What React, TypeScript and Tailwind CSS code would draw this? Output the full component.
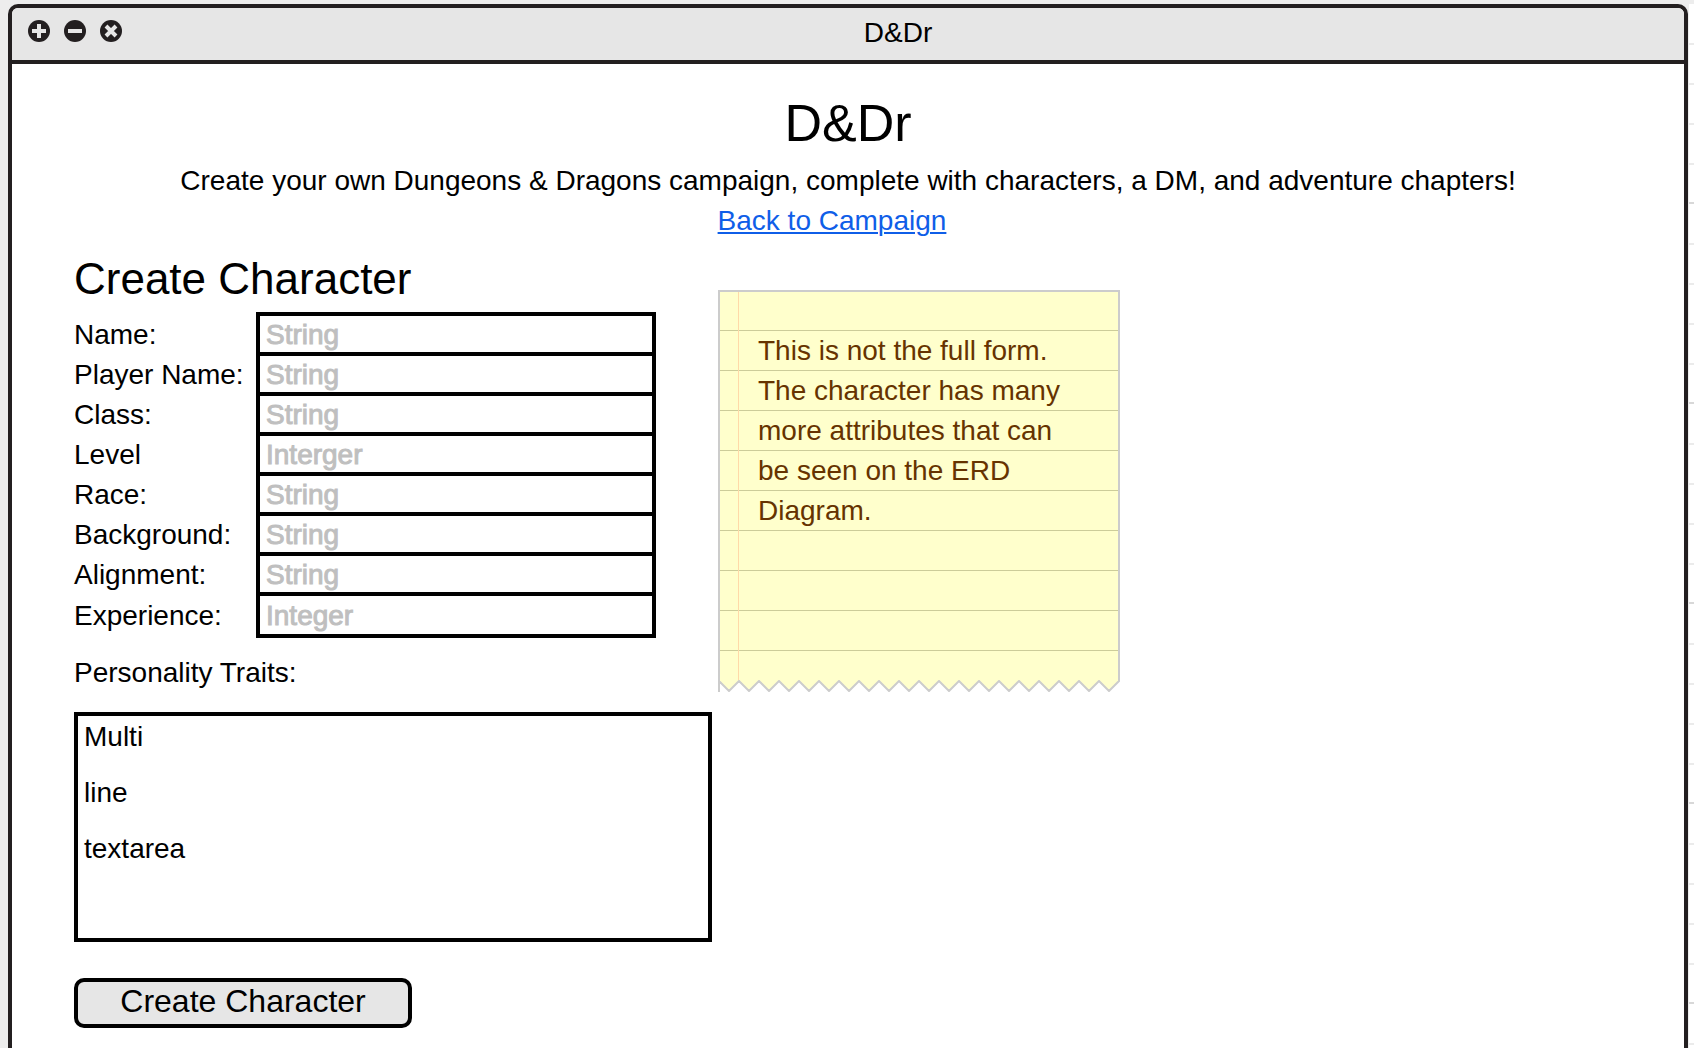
type Field = { id: string; label: string; hint: string };

const fields: Field[] = [
  { id: "name", label: "Name:", hint: "String" },
  { id: "player-name", label: "Player Name:", hint: "String" },
  { id: "class", label: "Class:", hint: "String" },
  { id: "level", label: "Level", hint: "Interger" },
  { id: "race", label: "Race:", hint: "String" },
  { id: "background", label: "Background:", hint: "String" },
  { id: "alignment", label: "Alignment:", hint: "String" },
  { id: "experience", label: "Experience:", hint: "Integer" },
];

const windowIcons = [
  { name: "Add", path: "M11 4V18M4 11H18" },
  { name: "Minimize", path: "M4 11H18" },
  { name: "Close", path: "M6 6L16 16M16 6L6 16" },
];

function TitleBar() {
  return (
    <header className="flex h-14 items-center border-b-4 border-[#231f20] bg-[#e6e6e6] px-4">
      <div className="flex gap-3.5">
        {windowIcons.map((icon) => (
          <button key={icon.name} type="button" aria-label={icon.name} className="mb-1.5">
            <svg className="block size-[22px]" viewBox="0 0 22 22" fill="none">
              <circle cx="11" cy="11" r="11" fill="#231f20" />
              <path d={icon.path} stroke="#e6e6e6" strokeWidth="4" />
            </svg>
          </button>
        ))}
      </div>
      <span className="mb-0.5 ml-1.5 flex-1 text-center">D&amp;Dr</span>
    </header>
  );
}

// Torn lower edge of the note: 20 teeth, each 20 wide and 10 high.
const teeth = Array.from({ length: 20 }, (_, i) => `L${11 + i * 20} 11L${21 + i * 20} 1`).join("");

function Note() {
  return (
    <aside className="mt-9 w-[402px] shrink-0 text-[#663300]">
      <div className="h-[390px] border-x-2 border-t-2 border-[#cccccc] bg-[#ffffcc] bg-[linear-gradient(to_right,transparent_18px,#ffd9a8_18px,#ffd9a8_19px,transparent_19px),repeating-linear-gradient(to_bottom,transparent_0px,transparent_38px,#cccc99_38px,#cccc99_39px,transparent_39px,transparent_40px)] pt-[39px] pr-10 pl-[38px]">
        <p>This is not the full form. The character has many more attributes that can be seen on the ERD Diagram.</p>
      </div>
      <svg className="block h-3 w-full" viewBox="0 0 402 12" fill="none">
        <path d={`M1 0V1${teeth}V0Z`} fill="#ffffcc" />
        <path d={`M1 0V12M1 1${teeth}V0`} stroke="#cccccc" strokeWidth="2" />
      </svg>
    </aside>
  );
}

function CharacterForm() {
  return (
    <form className="w-[638px]" onSubmit={(e) => e.preventDefault()}>
      <h2 className="mb-2 text-[44px] leading-[50px]">Create Character</h2>
      <div className="w-[582px]">
        {fields.map((field) => (
          <div key={field.id} className="-mb-1 flex h-11 items-center last:mb-0 last:h-[46px]">
            <label htmlFor={field.id} className="w-[182px] shrink-0 pt-0.5">
              {field.label}
            </label>
            <input
              id={field.id}
              type="text"
              placeholder={field.hint}
              className="h-full min-w-0 flex-1 border-4 border-black bg-white px-1.5 pt-0.5 outline-none placeholder:text-[#bfbfbf] placeholder:[-webkit-text-stroke:1px_#bfbfbf]"
            />
          </div>
        ))}
      </div>
      <label htmlFor="traits" className="mt-[15px] mb-[19px] block">
        Personality Traits:
      </label>
      <textarea
        id="traits"
        defaultValue={"Multi\n\nline\n\ntextarea"}
        className="block h-[230px] w-full resize-none overflow-hidden border-4 border-black bg-white px-1.5 pt-[7px] leading-7 outline-none"
      />
      <button
        type="submit"
        className="mt-9 h-[50px] w-[338px] rounded-[10px] border-4 border-black bg-[#e6e6e6] pb-1 text-[32px] leading-9"
      >
        Create Character
      </button>
    </form>
  );
}

export default function App() {
  return (
    <div className="flex h-screen flex-col bg-[#ededed] pt-1 font-['Liberation_Sans',Arial,sans-serif] text-[28px] leading-10 text-black">
      <div className="flex min-h-0 flex-1 pl-2">
        <div className="min-w-0 flex-1 overflow-hidden rounded-t-[10px] border-4 border-b-0 border-[#231f20] bg-white">
          <TitleBar />
          <main className="px-[62px] pt-[29px]">
            <div className="text-center">
              <h1 className="mb-2 text-[52px] leading-[60px]">D&amp;Dr</h1>
              <p>Create your own Dungeons &amp; Dragons campaign, complete with characters, a DM, and adventure chapters!</p>
              <a href="#campaign" className="ml-[-32px] text-[#0f5ee8] underline decoration-2 underline-offset-2">
                Back to Campaign
              </a>
            </div>
            <div className="mt-[13px] flex items-start gap-1.5">
              <CharacterForm />
              <Note />
            </div>
          </main>
        </div>
        {/* Sliver of canvas grid beside the window */}
        <div className="w-1.5 border-l border-[#ededed] bg-white bg-[repeating-linear-gradient(to_bottom,transparent_0px,transparent_39px,#ebebeb_39px,#ebebeb_41px,transparent_41px,transparent_79px,#ebebeb_79px,#ebebeb_81px,transparent_81px,transparent_119px,#ebebeb_119px,#ebebeb_121px,transparent_121px,transparent_159px,#ebebeb_159px,#ebebeb_161px,transparent_161px,transparent_198px,#d8d8d8_198px,#d8d8d8_200px)]" />
      </div>
    </div>
  );
}
